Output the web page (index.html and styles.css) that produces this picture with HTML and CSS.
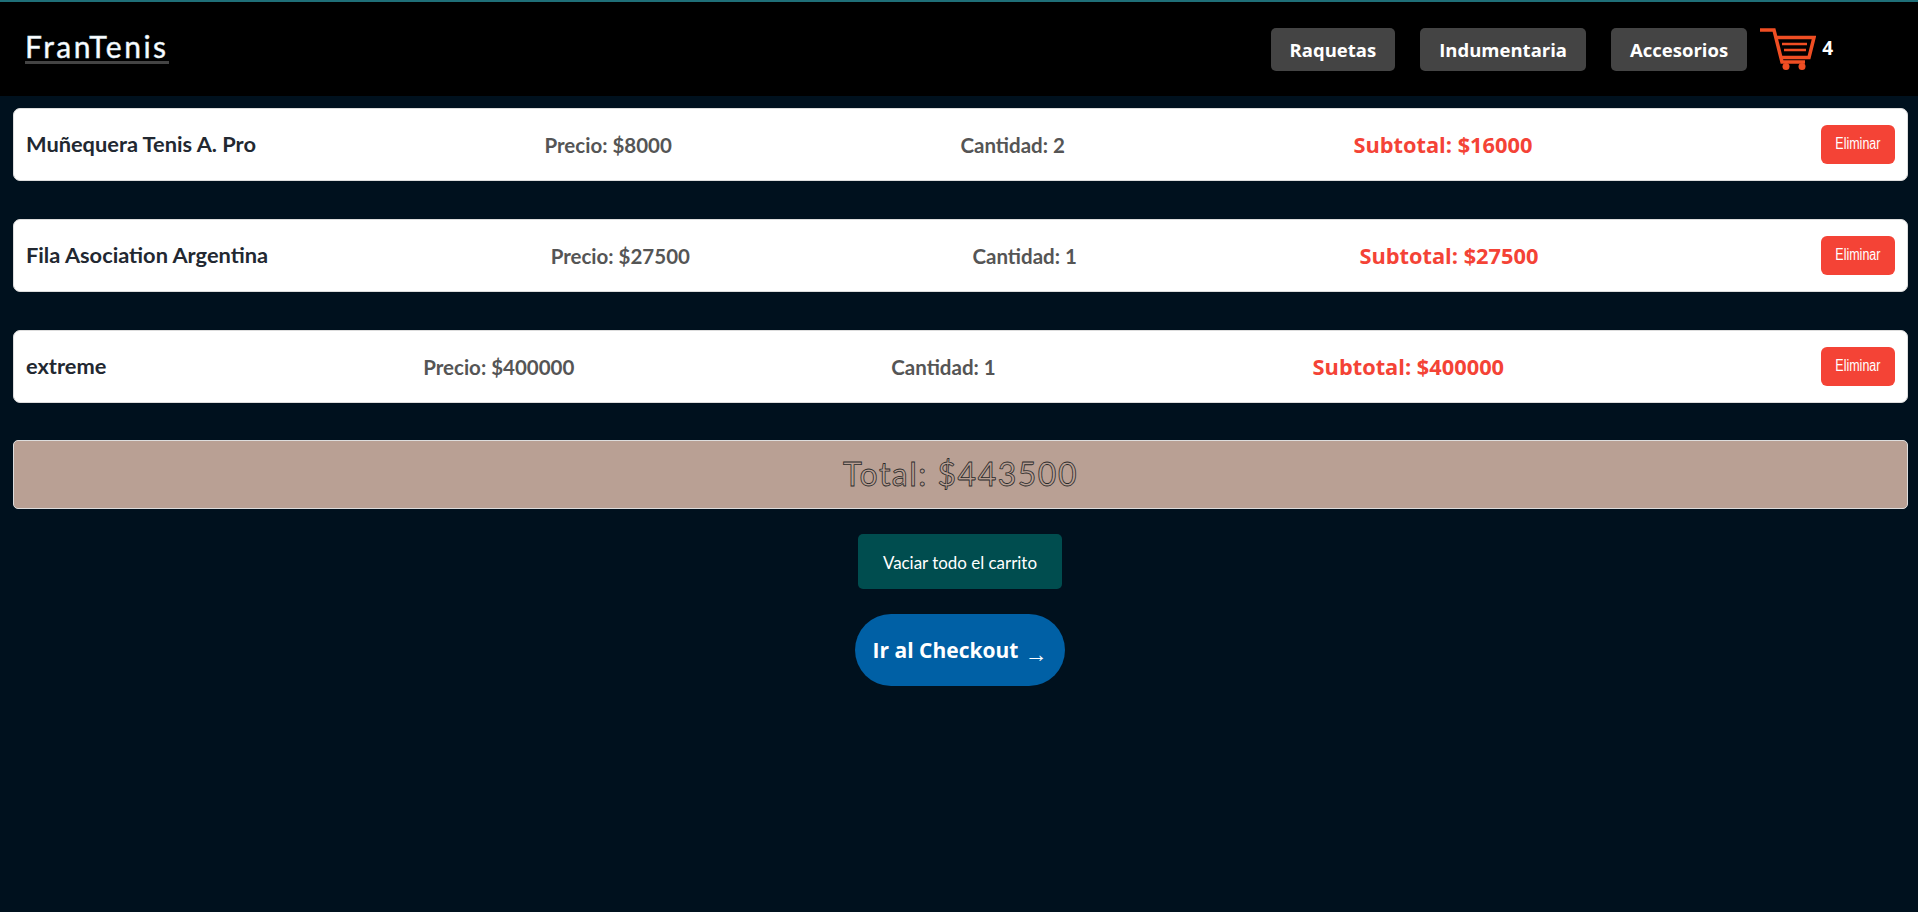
FILE: index.html
```html
<!DOCTYPE html>
<html lang="es">
<head>
    <meta charset="UTF-8">
    <title>FranTenis</title>
    <link rel="stylesheet" href="styles.css">
</head>
<body>
    <header class="navbar">
        <a class="logo" href="#">FranTenis</a>
        <nav class="nav-links">
            <a class="nav-btn" href="#">Raquetas</a>
            <a class="nav-btn" href="#">Indumentaria</a>
            <a class="nav-btn" href="#">Accesorios</a>
            <a class="cart" href="#">
                <svg class="cart-ico" width="56" height="42" viewBox="0 0 56 42" fill="none" stroke="#f04e23">
                    <path d="M0 2H14L22 34H45" stroke-width="3.500"/>
                    <path d="M16 9.500H54L49 29.500H21" stroke-width="3.500"/>
                    <path d="M22 16H47M24 22H46" stroke-width="2.500"/>
                    <circle cx="26" cy="38.500" r="3.500" fill="#f04e23" stroke="none"/>
                    <circle cx="42" cy="38.500" r="3.500" fill="#f04e23" stroke="none"/>
                </svg>
                <span class="cart-count">4</span>
            </a>
        </nav>
    </header>

    <main class="cart-page">
        <div class="item">
            <h3 class="item-name">Muñequera Tenis A. Pro</h3>
            <p class="item-info">Precio: $8000</p>
            <p class="item-info">Cantidad: 2</p>
            <p class="item-sub">Subtotal: $16000</p>
            <button class="btn-del"><span>Eliminar</span></button>
        </div>
        <div class="item">
            <h3 class="item-name">Fila Asociation Argentina</h3>
            <p class="item-info">Precio: $27500</p>
            <p class="item-info">Cantidad: 1</p>
            <p class="item-sub">Subtotal: $27500</p>
            <button class="btn-del"><span>Eliminar</span></button>
        </div>
        <div class="item">
            <h3 class="item-name">extreme</h3>
            <p class="item-info">Precio: $400000</p>
            <p class="item-info">Cantidad: 1</p>
            <p class="item-sub">Subtotal: $400000</p>
            <button class="btn-del"><span>Eliminar</span></button>
        </div>

        <div class="total">Total: $443500</div>
        <button class="btn-empty"><span>Vaciar todo el carrito</span></button>
        <a class="btn-checkout" href="#">Ir al Checkout <span class="arrow">→</span></a>
    </main>
</body>
</html>
```

FILE: styles.css
```css
* {
    margin: 0;
    padding: 0;
    box-sizing: border-box;
}

body {
    background: #00111e;
    min-height: 912px;
    font-family: "Lato", "Liberation Sans", sans-serif;
}

a {
    text-decoration: none;
}

.navbar {
    height: 96px;
    background: #000;
    border-top: 2px solid #1f6f78;
    padding: 0 25px;
    display: flex;
    align-items: center;
    justify-content: space-between;
}

.logo {
    color: #fff;
    font-size: 30px;
    line-height: 30px;
    letter-spacing: 2.500px;
    border-bottom: 3px solid #444;
    -webkit-text-stroke: 0.5px #cfe3ee;
    margin-top: -3px;
}

.nav-links {
    display: flex;
    align-items: center;
    padding-right: 60px;
}

.nav-btn {
    background: #444;
    color: #fff;
    font-family: "Open Sans", sans-serif;
    font-weight: 700;
    font-size: 18.500px;
    height: 43px;
    line-height: 43px;
    padding: 0 19px;
    border-radius: 5px;
    margin-left: 25px;
}

.cart {
    display: flex;
    align-items: flex-start;
    margin-left: 13px;
    color: #fff;
}

.cart-count {
    font-family: "Open Sans", sans-serif;
    font-weight: 700;
    font-size: 19px;
    margin-left: 6px;
    margin-top: 7px;
}

.cart-page {
    padding: 12px 10px 0 13px;
    display: flex;
    flex-direction: column;
    align-items: center;
}

.item {
    width: 100%;
    height: 73px;
    background: #fff;
    border: 1px solid #ddd;
    border-radius: 7px;
    padding: 0 12px;
    margin-bottom: 38px;
    display: flex;
    align-items: center;
    justify-content: space-between;
}

.item-name {
    font-size: 21.800px;
    font-weight: 700;
    color: #222831;
    margin-top: -2px;
}

.item-info {
    font-size: 20.500px;
    font-weight: 700;
    color: #555;
}

.item-sub {
    font-family: "Open Sans", sans-serif;
    font-size: 21.800px;
    font-weight: 700;
    color: #f44336;
    margin-top: -1px;
}

.btn-del {
    width: 74px;
    height: 39px;
    background: #f44336;
    color: #fff;
    border: none;
    border-radius: 6px;
    padding-bottom: 2px;
    font-family: "Liberation Sans", sans-serif;
    font-size: 16px;
}

.btn-del span {
    display: inline-block;
    transform: scaleX(0.78);
}

.total {
    width: 100%;
    height: 69px;
    margin-top: -1px;
    background: #b9a094;
    border: 1px solid #ddd;
    border-radius: 5px;
    text-align: center;
    line-height: 65px;
    font-size: 32px;
    letter-spacing: 1.500px;
    color: #b9a094;
    -webkit-text-stroke: 0.8px #2a2a2a;
}

.btn-empty {
    width: 204px;
    height: 55px;
    margin: 25px 1px 0 0;
    background: #004d4f;
    color: #fff;
    border: none;
    border-radius: 5px;
    font-family: "Lato", sans-serif;
    font-size: 18px;
}

.btn-empty span {
    display: inline-block;
    transform: scaleX(0.94);
}

.btn-checkout {
    width: 210px;
    height: 72px;
    margin: 25px 1px 0 0;
    border-radius: 36px;
    background: #0060a5;
    color: #fff;
    font-family: "Open Sans", sans-serif;
    font-weight: 700;
    font-size: 21px;
    display: flex;
    align-items: center;
    justify-content: center;
}

.arrow {
    margin-left: 6px;
    font-weight: 400;
    font-size: 23px;
    margin-top: 5px;
}
```
